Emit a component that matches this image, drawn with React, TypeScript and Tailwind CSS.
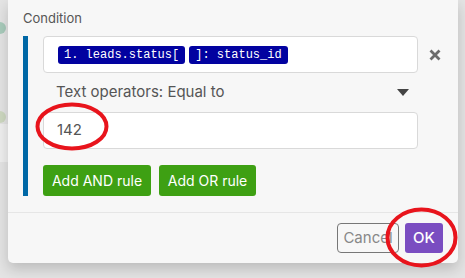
export default function App() {
  return (
    <div
      className="relative h-[278px] w-[465px] overflow-hidden bg-[#e4e4e4]"
      style={{ fontFamily: "Inter, 'Noto Sans', sans-serif" }}
    >
      {/* canvas bits peeking out on the left */}
      <div className="absolute left-[-6px] top-[22px] h-[12px] w-[12px] rounded-full bg-[#a8cbbb]" />
      <div className="absolute left-[-6px] top-[111px] h-[12px] w-[12px] rounded-full bg-[#cdd8c0]" />
      <div className="absolute left-0 top-[124px] h-[38px] w-[8px] bg-[#efefef]" />

      <div className="relative ml-[8px] w-[450px] rounded-b-[5px] bg-[#f7f7f7] shadow-[0_6px_14px_rgba(0,0,0,0.18)]">
        <div className="h-[212px] px-[15px] pt-[10px]">
          <div className="text-[13px] leading-[16px] text-[#555]">Condition</div>

          <div className="mt-[10px] flex">
            <div className="w-[5px] bg-[#0068a6]" />
            <div className="ml-[15px] w-[375px]">
              <div className="flex h-[37px] items-center gap-[4px] rounded-[4px] border border-[#d9d9d9] bg-white px-[14px]">
                <Chip text="1. leads.status[" />
                <Chip text="]: status_id" />
              </div>

              <div className="flex h-[39px] items-center justify-between pl-[13px] pr-[9px]">
                <span className="text-[15px] text-[#555]">Text operators: Equal to</span>
                <svg width="12" height="7" viewBox="0 0 12 7">
                  <path d="M0 0h12L6 7z" fill="#444" />
                </svg>
              </div>

              <div className="flex h-[37px] items-center rounded-[4px] border border-[#d9d9d9] bg-white px-[13px]">
                <span className="text-[15px] text-[#555]">142</span>
              </div>

              <div className="mt-[16px] flex gap-[8px]">
                <button className="h-[31px] w-[108px] rounded-[3px] bg-[#3ea013] text-[14px] text-white">
                  Add AND rule
                </button>
                <button className="h-[31px] w-[97px] rounded-[3px] bg-[#3ea013] text-[14px] text-white">
                  Add OR rule
                </button>
              </div>
            </div>

            {/* remove condition */}
            <div className="ml-[11px] flex h-[37px] items-center">
              <svg width="12" height="12" viewBox="0 0 12 12">
                <path d="M1.5 1.5l9 9M10.5 1.5l-9 9" stroke="#6b6b6b" strokeWidth="2.8" />
              </svg>
            </div>
          </div>
        </div>

        <div className="flex h-[51px] items-center justify-end gap-[6px] border-t border-[#e6e6e6] pr-[15px]">
          <button className="h-[30px] w-[62px] overflow-hidden rounded-[4px] border border-[#777] text-[15px] text-[#888]">
            Cancel
          </button>
          <button className="h-[30px] w-[38px] rounded-[3px] bg-[#7a4dc1] text-[15px] font-medium text-white">
            OK
          </button>
        </div>
      </div>

      {/* red annotation circles */}
      <svg className="pointer-events-none absolute left-0 top-0" width="465" height="278">
        <ellipse cx="72" cy="126.5" rx="34.5" ry="22" fill="none" stroke="#e8141c" strokeWidth="4" />
        <ellipse cx="421.5" cy="237.5" rx="34" ry="28" fill="none" stroke="#e8141c" strokeWidth="4" />
      </svg>
    </div>
  );
}

function Chip({ text }: { text: string }) {
  return (
    <span
      className="whitespace-pre rounded-[3px] bg-[#0202a0] px-[6px] text-[12px] leading-[18px] text-white"
      style={{ fontFamily: "'Liberation Mono', monospace" }}
    >
      {text}
    </span>
  );
}
